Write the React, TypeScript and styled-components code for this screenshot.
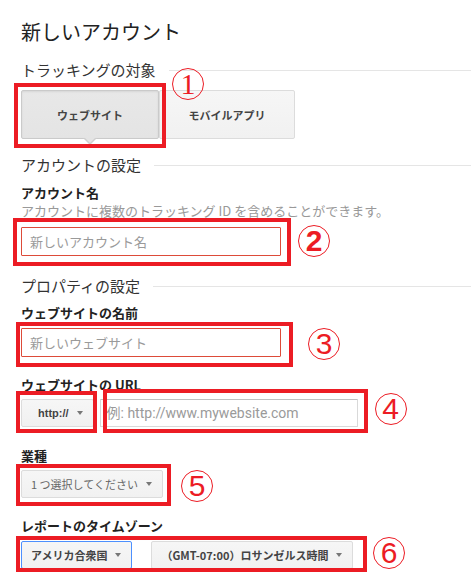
import React from "react";
import styled, { createGlobalStyle, css } from "styled-components";

const RED = "#ec1c24";
const JP = `"Noto Sans CJK JP", "Noto Sans", sans-serif`;

const Global = createGlobalStyle`
  html, body { margin: 0; padding: 0; background: #fff; }
  body { font-family: ${JP}; color: #222; }
`;

const Page = styled.div`
  width: 471px;
  height: 583px;
  overflow: hidden;
  box-sizing: border-box;
  padding: 20px 0 0 21px;
  display: flex;
  flex-direction: column;
  align-items: flex-start;
`;

const Title = styled.h1`
  margin: 0;
  font-size: 20px;
  line-height: 24px;
  font-weight: 400;
  color: #222;
`;

const SectionHead = styled.div<{ $mt: number }>`
  align-self: stretch;
  display: flex;
  align-items: center;
  gap: 13px;
  margin-top: ${(p) => p.$mt}px;
  font-size: 15px;
  line-height: 20px;
  color: #333;
  white-space: nowrap;
  &::after {
    content: "";
    flex: 1;
    border-top: 1px solid #e5e5e5;
  }
`;

const Label = styled.div<{ $mt: number }>`
  margin-top: ${(p) => p.$mt}px;
  font-size: 13px;
  line-height: 18px;
  font-weight: 700;
  color: #222;
`;

const Help = styled.div`
  font-size: 13px;
  line-height: 18px;
  color: #999;
`;

type Inset = { t: number; r: number; b: number; l: number };

const Frame = styled.div<{ $i: Inset; $mt?: number }>`
  position: relative;
  display: flex;
  margin-top: ${(p) => p.$mt ?? 0}px;
  &::after {
    content: "";
    position: absolute;
    top: ${(p) => -p.$i.t}px;
    right: ${(p) => -p.$i.r}px;
    bottom: ${(p) => -p.$i.b}px;
    left: ${(p) => -p.$i.l}px;
    border: 4px solid ${RED};
    pointer-events: none;
    z-index: 2;
  }
`;

const Badge = styled.span<{ $x: number; $y: number; $serif?: boolean; $bold?: boolean }>`
  position: absolute;
  left: ${(p) => p.$x}px;
  top: ${(p) => p.$y}px;
  width: 32px;
  height: 32px;
  box-sizing: border-box;
  border: 1px solid ${RED};
  border-radius: 50%;
  color: ${RED};
  display: flex;
  align-items: center;
  justify-content: center;
  font-family: ${(p) => (p.$serif ? `"Liberation Serif", serif` : `"Liberation Sans", sans-serif`)};
  font-size: 30px;
  font-weight: ${(p) => (p.$bold ? 700 : 400)};
  line-height: 1;
  z-index: 3;
`;

const Toggle = styled.div`
  display: flex;
  margin-top: 10px;
`;

const ToggleBtn = styled.div<{ $on?: boolean; $w: number }>`
  position: relative;
  width: ${(p) => p.$w}px;
  height: 49px;
  box-sizing: border-box;
  display: flex;
  align-items: center;
  justify-content: center;
  font-size: 11px;
  font-weight: 700;
  color: #444;
  border-radius: 2px;
  border: 1px solid ${(p) => (p.$on ? "#cacaca" : "#dcdcdc")};
  background: ${(p) =>
    p.$on ? "linear-gradient(#e8e8e8, #e4e4e4)" : "linear-gradient(#f6f6f6, #f1f1f1)"};
  ${(p) =>
    p.$on &&
    css`
      box-shadow: inset 0 1px 2px rgba(0, 0, 0, 0.08);
      &::before {
        content: "";
        position: absolute;
        left: 50%;
        top: 100%;
        transform: translateX(-50%);
        border-left: 7px solid transparent;
        border-right: 7px solid transparent;
        border-top: 7px solid #cfcfcf;
      }
      &::after {
        content: "";
        position: absolute;
        left: 50%;
        top: calc(100% - 1px);
        transform: translateX(-50%);
        border-left: 6px solid transparent;
        border-right: 6px solid transparent;
        border-top: 6px solid #e4e4e4;
      }
    `}
`;

const TextInput = styled.input<{ $w: number; $h: number; $error?: boolean; $latin?: boolean }>`
  display: block;
  width: ${(p) => p.$w}px;
  height: ${(p) => p.$h}px;
  box-sizing: border-box;
  margin: 0;
  padding: 0 0 0 ${(p) => (p.$latin ? 6 : 8)}px;
  border: 1px solid ${(p) => (p.$error ? "#dd4b39" : "#d9d9d9")};
  border-top-color: ${(p) => (p.$error ? "#dd4b39" : "#c0c0c0")};
  border-radius: 1px;
  background: #fff;
  outline: none;
  font-family: ${(p) => (p.$latin ? `Roboto, "Noto Sans CJK JP", sans-serif` : JP)};
  font-size: ${(p) => (p.$latin ? 14 : 13)}px;
  color: #222;
  &::placeholder {
    color: #9a9a9a;
    opacity: 1;
  }
`;

const Row = styled.div<{ $gap: number; $mt?: number }>`
  display: flex;
  align-items: center;
  gap: ${(p) => p.$gap}px;
  margin-top: ${(p) => p.$mt ?? 0}px;
`;

const Select = styled.div<{ $focus?: boolean; $muted?: boolean; $pl?: number; $latin?: boolean }>`
  display: inline-flex;
  align-items: center;
  gap: 8px;
  height: 28px;
  box-sizing: border-box;
  padding: 0 10px 0 ${(p) => p.$pl ?? 9}px;
  border: 1px solid ${(p) => (p.$focus ? "#4d90fe" : "#dcdcdc")};
  border-radius: 2px;
  background: linear-gradient(#f6f6f6, #f1f1f1);
  font-family: ${(p) => (p.$latin ? `"Liberation Sans", sans-serif` : JP)};
  font-size: 11px;
  font-weight: ${(p) => (p.$muted ? 400 : 700)};
  color: ${(p) => (p.$muted ? "#666" : "#444")};
  white-space: nowrap;
`;

const Caret = styled.span`
  width: 0;
  height: 0;
  border-left: 3.5px solid transparent;
  border-right: 3.5px solid transparent;
  border-top: 4px solid #777;
`;

export default function App() {
  return (
    <>
      <Global />
      <Page>
        <Title>新しいアカウント</Title>

        <SectionHead $mt={16}>トラッキングの対象</SectionHead>
        <Toggle>
          <Frame $i={{ t: 7, r: 7, b: 9, l: 7 }}>
            <ToggleBtn $on $w={138}>ウェブサイト</ToggleBtn>
            <Badge $x={151} $y={-22} $serif>1</Badge>
          </Frame>
          <ToggleBtn $w={136}>モバイルアプリ</ToggleBtn>
        </Toggle>

        <SectionHead $mt={16}>アカウントの設定</SectionHead>
        <Label $mt={9}>アカウント名</Label>
        <Help>アカウントに複数のトラッキング ID を含めることができます。</Help>
        <Frame $i={{ t: 9, r: 10, b: 10, l: 8 }} $mt={7}>
          <TextInput $w={260} $h={29} $error placeholder="新しいアカウント名" />
          <Badge $x={277} $y={-2} $bold>2</Badge>
        </Frame>

        <SectionHead $mt={20}>プロパティの設定</SectionHead>
        <Label $mt={8}>ウェブサイトの名前</Label>
        <Frame $i={{ t: 6, r: 12, b: 10, l: 5 }} $mt={6}>
          <TextInput $w={260} $h={29} $error placeholder="新しいウェブサイト" />
          <Badge $x={287} $y={0}>3</Badge>
        </Frame>

        <Label $mt={19}>ウェブサイトの URL</Label>
        <Row $gap={6} $mt={5}>
          <Frame $i={{ t: 8, r: 3, b: 6, l: 5 }}>
            <Select $latin $pl={16}>
              http://
              <Caret />
            </Select>
          </Frame>
          <Frame $i={{ t: 10, r: 10, b: 6, l: -3 }}>
            <TextInput $w={258} $h={28} $latin placeholder="例: http://www.mywebsite.com" />
            <Badge $x={275} $y={-6}>4</Badge>
          </Frame>
        </Row>

        <Label $mt={20}>業種</Label>
        <Frame $i={{ t: 6, r: 8, b: 8, l: 5 }} $mt={5}>
          <Select $muted>
            1 つ選択してください
            <Caret />
          </Select>
          <Badge $x={160} $y={0}>5</Badge>
        </Frame>

        <Label $mt={19}>レポートのタイムゾーン</Label>
        <Frame $i={{ t: 5, r: 14, b: 3, l: 5 }} $mt={6}>
          <Row $gap={19}>
            <Select $focus>
              アメリカ合衆国
              <Caret />
            </Select>
            <Select>
              （GMT-07:00）ロサンゼルス時間
              <Caret />
            </Select>
          </Row>
          <Badge $x={352} $y={-4}>6</Badge>
        </Frame>
      </Page>
    </>
  );
}
